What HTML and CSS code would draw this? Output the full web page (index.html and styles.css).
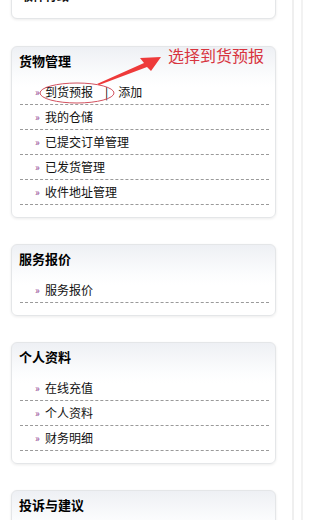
FILE: index.html
```html
<!DOCTYPE html>
<html lang="zh">
<head>
<meta charset="utf-8">
<title>会员中心</title>
<link rel="stylesheet" href="styles.css">
</head>
<body>
<div class="page">
  <div class="sidebar">
    <div class="card card-cut">
      <div class="cut-line">收件行政</div>
    </div>

    <div class="card">
      <h3 class="card-title">货物管理</h3>
      <ul class="menu">
        <li class="menu-item"><span class="mark">»</span><span class="hl">到货预报</span><span class="sep">|</span><span>添加</span></li>
        <li class="menu-item"><span class="mark">»</span>我的仓储</li>
        <li class="menu-item"><span class="mark">»</span>已提交订单管理</li>
        <li class="menu-item"><span class="mark">»</span>已发货管理</li>
        <li class="menu-item"><span class="mark">»</span>收件地址管理</li>
      </ul>
    </div>

    <div class="card">
      <h3 class="card-title">服务报价</h3>
      <ul class="menu">
        <li class="menu-item"><span class="mark">»</span>服务报价</li>
      </ul>
    </div>

    <div class="card">
      <h3 class="card-title">个人资料</h3>
      <ul class="menu">
        <li class="menu-item"><span class="mark">»</span>在线充值</li>
        <li class="menu-item"><span class="mark">»</span>个人资料</li>
        <li class="menu-item"><span class="mark">»</span>财务明细</li>
      </ul>
    </div>

    <div class="card card-last">
      <h3 class="card-title">投诉与建议</h3>
    </div>

    <svg class="annot" width="292" height="120" viewBox="0 0 292 120">
      <ellipse cx="77" cy="93" rx="37" ry="10" fill="none" stroke="#d2505e" stroke-width="1"/>
      <polygon points="97,84 144,63 140,58 161,57 151,71 147,67 99,85" fill="#ee3a3a"/>
    </svg>
    <div class="annot-text">选择到货预报</div>
  </div>
  <div class="rail"></div>
</div>
</body>
</html>
```

FILE: styles.css
```css
html, body {
  margin: 0;
  padding: 0;
  background: #fff;
}
body {
  font-family: "Noto Sans CJK SC", "DejaVu Sans", sans-serif;
  font-size: 12px;
  color: #111;
  overflow: hidden;
}
.page {
  display: flex;
  width: 303px;
  height: 520px;
  overflow: hidden;
}
.sidebar {
  position: relative;
  width: 281px;
  padding-left: 11px;
  flex: none;
}
.rail {
  width: 7px;
  border-left: 2px solid #efefef;
  border-right: 2px solid #f2f2f2;
  background: #fff;
}
.card {
  border: 1px solid #e4e6e8;
  border-radius: 6px;
  background: linear-gradient(#eef0f4, #fbfcfd 28px, #fff 40px);
  box-shadow: 0 1px 3px rgba(0, 0, 0, 0.08);
  padding: 0 6px 12px 8px;
  box-sizing: border-box;
  width: 265px;
  margin-bottom: 26px;
}
.card-cut {
  margin-top: -17px;
  background: #fff;
  padding-bottom: 10px;
  margin-bottom: 27px;
}
.card-last {
  min-height: 60px;
}
.cut-line {
  line-height: 24px;
  height: 24px;
  padding-left: 1px;
  font-weight: bold;
}
.card-title {
  margin: 0 0 0 -1px;
  height: 33px;
  line-height: 28px;
  font-size: 13px;
  font-weight: bold;
  color: #000;
}
.menu {
  list-style: none;
  margin: 0;
  padding: 0;
}
.menu-item {
  height: 24px;
  line-height: 24px;
  border-bottom: 1px dashed #9a9a9a;
  padding-left: 15px;
  display: flex;
  align-items: center;
  white-space: nowrap;
}
.mark {
  width: 10px;
  font-size: 10px;
  color: #8e3b8e;
  flex: none;
}
.sep {
  margin: 0 10px 0 12px;
  color: #000;
}
.annot {
  position: absolute;
  left: 0;
  top: 0;
  pointer-events: none;
}
.annot-text {
  position: absolute;
  left: 168px;
  top: 45px;
  font-size: 16px;
  line-height: 20px;
  color: #d8343e;
  white-space: nowrap;
}
```
